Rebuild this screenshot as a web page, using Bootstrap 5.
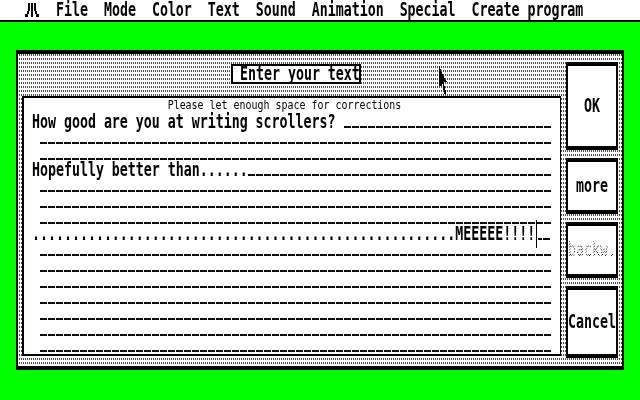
<!DOCTYPE html>
<html lang="en">

<head>
    <meta charset="UTF-8">
    <meta name="viewport" content="width=device-width, initial-scale=1.0">
    <title>Enter your text</title>
    <link href="https://cdn.jsdelivr.net/npm/bootstrap@5.3.0/dist/css/bootstrap.min.css" rel="stylesheet">
    <style>
        body {
            background-color: #00ff00;
            height: 400px;
            overflow: hidden;
            color: #000;
            font-family: "DejaVu Sans Mono", "Liberation Mono", monospace;
        }

        /* 8px wide characters, stretched to the tall look of the ST system font */
        .st-text {
            display: inline-block;
            height: 13px;
            font-size: 13.28px;
            font-weight: 700;
            line-height: 13px;
            white-space: pre;
            transform-origin: 0 11.1px;
            transform: translateY(4.9px) scaleY(1.4);
            filter: grayscale(1) contrast(3);
        }

        .st-menu {
            height: 22px;
            padding-left: 25px;
            background-color: #fff;
            border-bottom: 2px solid #000;
        }

        .st-logo {
            margin-top: 3px;
            margin-right: 1px;
            shape-rendering: crispEdges;
        }

        .st-dialog {
            height: 320px;
            margin: 28px 16px 0;
            padding: 8px 4px;
            border: solid #000;
            border-width: 4px 2px;
            background-color: #fff;
            background-image:
                linear-gradient(transparent 0 2px, #fff 2px),
                linear-gradient(90deg, #fff 0 1px, #ff0000 1px);
            background-size: 100% 4px, 2px 2px;
        }

        .st-left {
            width: 539px;
        }

        .st-title {
            width: 130px;
            height: 20px;
            margin-top: 2px;
            margin-left: 209px;
            padding-left: 7px;
            background-color: #fff;
            border: 2px solid #000;
        }

        .st-title .st-text {
            transform: translateY(2.9px) scaleY(1.4);
        }

        .st-box {
            height: 260px;
            margin-top: 12px;
            padding: 0 8px;
            background-color: #fff;
            border: solid #000;
            border-width: 2px 1px 2px 2px;
        }

        .st-hint {
            height: 14px;
            padding-right: 15px;
            font-size: 9.96px;
            line-height: 13px;
        }

        .st-hint span {
            display: inline-block;
            transform: scaleY(1.25);
            filter: grayscale(1) contrast(3);
        }

        .st-row {
            height: 16px;
        }

        .st-fill {
            height: 2px;
            margin-top: 14px;
            background-image: repeating-linear-gradient(90deg, #000 0 7px, transparent 7px 8px);
        }

        .st-fill-tail {
            width: 13px;
            margin-left: 3px;
            background-position: -3px 0;
            background-image: linear-gradient(90deg, #000 0 7px, transparent 7px);
            background-size: 8px 2px;
        }

        .st-caret {
            top: -4px;
            left: 504px;
            width: 1px;
            height: 28px;
            background-color: #000;
        }

        .st-buttons {
            width: 52px;
            margin-left: 5px;
        }

        .st-btn {
            --bs-btn-padding-x: 0;
            --bs-btn-padding-y: 0;
            --bs-btn-bg: #fff;
            --bs-btn-hover-bg: #fff;
            --bs-btn-border-color: #000;
            --bs-btn-border-radius: 0;
            --bs-btn-disabled-opacity: 1;
            --bs-btn-disabled-bg: #fff;
            --bs-btn-disabled-border-color: #000;
            color: #000;
            border-width: 4px 2px;
            font-size: inherit;
            line-height: 1;
        }

        .st-btn .st-text {
            display: block;
            transform: translateY(1.4px) scaleY(1.4);
        }

        .st-ok { height: 88px; }
        .st-more { height: 56px; }
        .st-back { height: 56px; }
        .st-cancel { height: 72px; }

        .st-back .st-text {
            font-weight: 400;
            color: transparent;
            background: conic-gradient(#000 25%, #fff 0 50%, #000 0 75%, #fff 0) 0 0 / 2px 2px;
            -webkit-background-clip: text;
            background-clip: text;
            filter: none;
        }

        .st-pointer {
            top: 66px;
            left: 439px;
            shape-rendering: crispEdges;
        }
    </style>
</head>

<body class="position-relative">
    <nav class="st-menu d-flex gap-3">
        <svg class="st-logo" width="14" height="14" viewBox="0 0 14 14">
            <path d="M6 0h2v14H6zM3 0h2v8H4v3H3v3H0v-3h2V8h1zM9 0h2v8h1v3h2v3h-3v-3h-1V8H9z" fill="#000"/>
        </svg>
        <span class="st-text">File</span>
        <span class="st-text">Mode</span>
        <span class="st-text">Color</span>
        <span class="st-text">Text</span>
        <span class="st-text">Sound</span>
        <span class="st-text">Animation</span>
        <span class="st-text">Special</span>
        <span class="st-text">Create program</span>
    </nav>

    <div class="st-dialog d-flex">
        <div class="st-left">
            <div class="st-title d-flex"><span class="st-text">Enter your text</span></div>
            <div class="st-box">
                <div class="st-hint text-center"><span>Please let enough space for corrections</span></div>

                <div class="st-row d-flex"><span class="st-text">How good are you at writing scrollers?</span><span class="st-fill flex-grow-1 ms-2"></span></div>
                <div class="st-row d-flex ps-2"><span class="st-fill flex-grow-1"></span></div>
                <div class="st-row d-flex ps-2"><span class="st-fill flex-grow-1"></span></div>
                <div class="st-row d-flex"><span class="st-text">Hopefully better than......</span><span class="st-fill flex-grow-1"></span></div>
                <div class="st-row d-flex ps-2"><span class="st-fill flex-grow-1"></span></div>
                <div class="st-row d-flex ps-2"><span class="st-fill flex-grow-1"></span></div>
                <div class="st-row d-flex ps-2"><span class="st-fill flex-grow-1"></span></div>
                <div class="st-row d-flex position-relative">
                    <span class="st-text">.....................................................MEEEEE!!!!</span><span class="st-fill st-fill-tail"></span>
                    <span class="st-caret position-absolute"></span>
                </div>
                <div class="st-row d-flex ps-2"><span class="st-fill flex-grow-1"></span></div>
                <div class="st-row d-flex ps-2"><span class="st-fill flex-grow-1"></span></div>
                <div class="st-row d-flex ps-2"><span class="st-fill flex-grow-1"></span></div>
                <div class="st-row d-flex ps-2"><span class="st-fill flex-grow-1"></span></div>
                <div class="st-row d-flex ps-2"><span class="st-fill flex-grow-1"></span></div>
                <div class="st-row d-flex ps-2"><span class="st-fill flex-grow-1"></span></div>
                <div class="st-row d-flex ps-2"><span class="st-fill flex-grow-1"></span></div>
            </div>
        </div>

        <div class="st-buttons d-flex flex-column gap-2">
            <button type="button" class="btn st-btn st-ok"><span class="st-text">OK</span></button>
            <button type="button" class="btn st-btn st-more"><span class="st-text">more</span></button>
            <button type="button" class="btn st-btn st-back" disabled><span class="st-text">backw.</span></button>
            <button type="button" class="btn st-btn st-cancel"><span class="st-text">Cancel</span></button>
        </div>
    </div>

    <svg class="st-pointer position-absolute" width="9" height="28" viewBox="0 0 9 28">
        <path d="M0 0h1v3h1v3h1v2h1v2h1v2h1v2h1v1h1v1H5v4h1v4h1v4H5v-4H4v-6H3v2H0z" fill="#000"/>
    </svg>
</body>

</html>
